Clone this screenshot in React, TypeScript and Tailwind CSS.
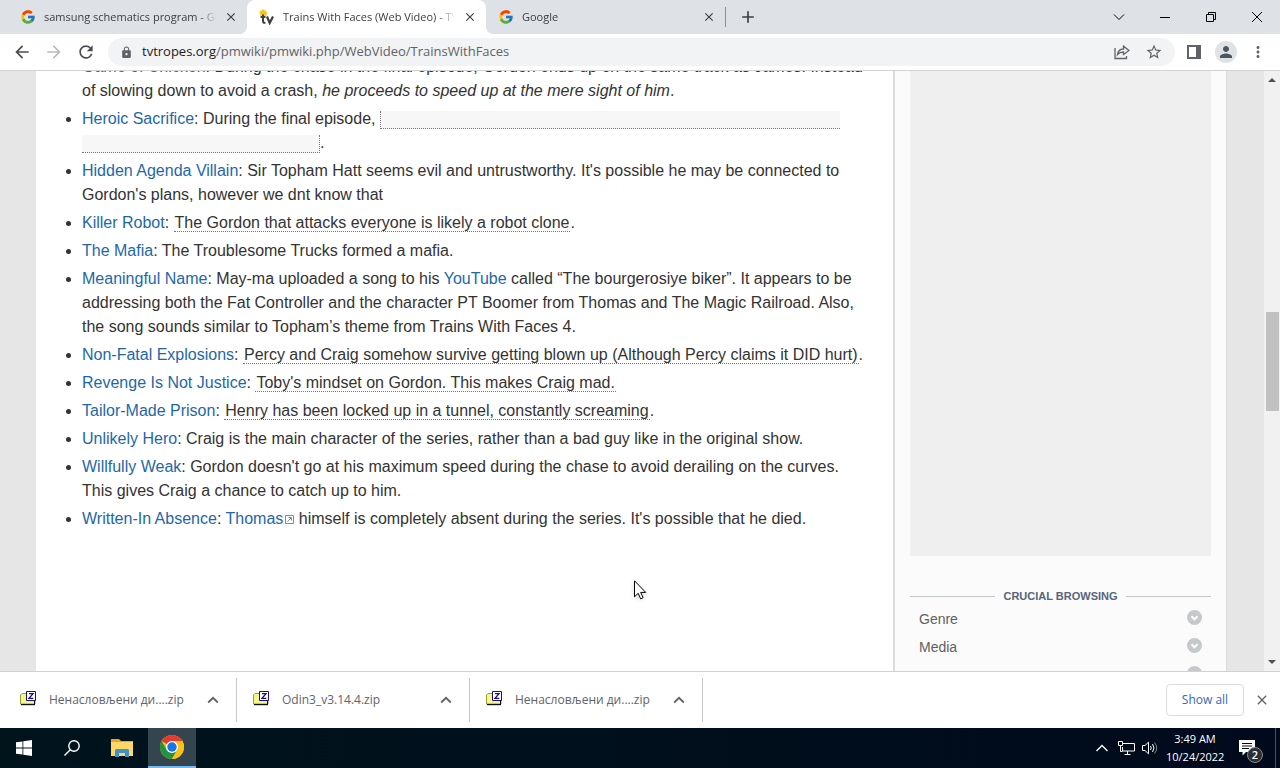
import type { ReactNode } from 'react';
import { FcGoogle } from 'react-icons/fc';
import {
  MdArrowBack,
  MdArrowForward,
  MdClose,
  MdLock,
  MdMoreVert,
  MdPerson,
  MdRefresh,
  MdStarOutline,
  MdAdd,
} from 'react-icons/md';

const DOWNLOADS = ['Ненасловљени ди....zip', 'Odin3_v3.14.4.zip', 'Ненасловљени ди....zip'];

// The last row is scrolled off, only its toggle shows
const CATEGORIES = ['Genre', 'Media', ''];

function TvIcon() {
  return (
    <svg width="16" height="16" viewBox="0 0 16 16" aria-hidden="true">
      <path d="M4 0l1.300 1.400L7 1.200l.2 1.700L8.800 4 7.600 5.200l.1 1.700-1.800-.2L4.500 8 3 6.600l-1.900.1.200-1.700L0 4l1.200-1.200L1 1.200l1.700.2z" fill="#fbc61c" />
      <path d="M4 5.500v6.700c0 1.300.6 1.800 2.500 1.500M1.500 8h5" stroke="#3c4043" strokeWidth="2" fill="none" />
      <path d="M8 7.500l2.700 6.500L14 7.500" stroke="#3c4043" strokeWidth="2.200" fill="none" />
    </svg>
  );
}

function ChevronUp({ className }: { className: string }) {
  return (
    <svg className={className} width="12" height="8" viewBox="0 0 12 8" fill="none" stroke="currentColor" strokeWidth="1.800" aria-hidden="true">
      <path d="M1.200 6.500L6 1.800l4.800 4.700" />
    </svg>
  );
}

function ZipIcon() {
  return (
    <svg className="mb-1" width="16" height="15" viewBox="0 0 16 15" aria-hidden="true">
      <path d="M.5 13V4L2 2.500h4l1 1.500h8v9z" fill="#f4f88a" stroke="#9a9c3a" />
      <path d="M1 13h14v1.200H1z" fill="#111" />
      <path d="M14.500 10v4" stroke="#111" />
      <path d="M6.500.500h9v9h-9z" fill="#fff" stroke="#1a0d84" />
      <path d="M9 2.700h4L9 7.300h4.300" stroke="#1a0d84" strokeWidth="1.300" fill="none" />
    </svg>
  );
}

function ChromeIcon() {
  return (
    <svg width="24" height="24" viewBox="0 0 24 24" aria-hidden="true">
      <circle cx="12" cy="12" r="12" fill="#fbc116" />
      <path d="M12 12L1.600 6A12 12 0 0122.400 6z" fill="#e33b2e" />
      <path d="M1.600 6A12 12 0 0012 24l5.200-9L12 12 6.800 15z" fill="#229342" />
      <path d="M12 6h10.400A12 12 0 0112 24l5.200-9z" fill="#fbc116" />
      <circle cx="12" cy="12" r="6" fill="#fff" />
      <circle cx="12" cy="12" r="4.700" fill="#1a73e8" />
    </svg>
  );
}

function Tab({ icon, title, active }: { icon: ReactNode; title: string; active?: boolean }) {
  return (
    <div className={`relative flex h-full w-[239px] items-center pl-3 pr-2 ${active ? 'rounded-t-lg bg-white' : ''}`}>
      <span className="flex w-4 shrink-0">{icon}</span>
      <span className="ml-2 w-[177px] overflow-hidden whitespace-nowrap [mask-image:linear-gradient(to_right,black_90%,transparent)]">
        {title}
      </span>
      <button aria-label={`Close ${title}`} className="ml-2 flex w-4 justify-center">
        <MdClose size={14} className="stroke-current" />
      </button>
      {active && (
        <>
          <span className="absolute -left-2 bottom-0 size-2 bg-[radial-gradient(circle_at_0_0,transparent_8px,white_8px)]" />
          <span className="absolute -right-2 bottom-0 size-2 bg-[radial-gradient(circle_at_100%_0,transparent_8px,white_8px)]" />
        </>
      )}
    </div>
  );
}

function TabStrip() {
  return (
    <div className="flex h-[34px] items-center bg-[#dee1e6] pl-2 text-[11px] text-[#3c4043]">
      <Tab icon={<FcGoogle size={16} />} title="samsung schematics program - Google Search" />
      <Tab icon={<TvIcon />} title="Trains With Faces (Web Video) - TV Tropes" active />
      <Tab icon={<FcGoogle size={16} />} title="Google" />
      <span className="h-5 w-px bg-[#8b8e93]" />
      <button aria-label="New tab" className="ml-3"><MdAdd size={20} /></button>
      <div className="ml-auto flex h-7 items-center text-black">
        <button aria-label="Search tabs" className="flex w-[46px] justify-center">
          <svg width="12" height="8" viewBox="0 0 12 8" fill="none" stroke="currentColor"><path d="M1 1.500l5 5 5-5" /></svg>
        </button>
        <button aria-label="Minimize" className="flex w-[46px] justify-center">
          <svg width="10" height="10" viewBox="0 0 10 10" stroke="currentColor"><path d="M0 5.500h10" /></svg>
        </button>
        <button aria-label="Restore" className="flex w-[46px] justify-center">
          <svg width="10" height="10" viewBox="0 0 10 10" fill="none" stroke="currentColor"><path d="M.5 2.500h7v7h-7zM2.500 2.500v-2h7v7h-2" /></svg>
        </button>
        <button aria-label="Close window" className="flex w-[46px] justify-center">
          <svg width="10" height="10" viewBox="0 0 10 10" stroke="currentColor"><path d="M0 0l10 10M10 0L0 10" /></svg>
        </button>
      </div>
    </div>
  );
}

function Toolbar() {
  return (
    <div className="flex h-[37px] items-center border-b border-[#d0d2d5] bg-white pl-3 pr-[13px] text-[#5f6368]">
      <button aria-label="Back" className="text-[#4a4d51]"><MdArrowBack size={20} /></button>
      <button aria-label="Forward" className="ml-3 text-[#b9bbbe]"><MdArrowForward size={20} /></button>
      <button aria-label="Reload" className="ml-3 text-[#4a4d51]"><MdRefresh size={20} /></button>
      <div className="ml-3 flex h-7 flex-1 items-center rounded-full bg-[#f1f3f4] px-3">
        <MdLock size={13} />
        <div className="ml-[9px] flex-1 text-[13px]">
          <span className="text-[#202124]">tvtropes.org</span>/pmwiki/pmwiki.php/WebVideo/TrainsWithFaces
        </div>
        <button aria-label="Share">
          <svg width="16" height="16" viewBox="0 0 16 16" fill="none" stroke="currentColor" strokeWidth="1.300"><path d="M1 4v10.500h11.500V12M3.500 10.500c.5-3.500 3-5.500 6-5.500V2.200L15 6.500l-5.500 4V8c-2.500 0-4.500.7-6 2.500z" /></svg>
        </button>
        <button aria-label="Bookmark" className="ml-[15px]"><MdStarOutline size={18} /></button>
      </div>
      <button aria-label="Side panel" className="ml-3">
        <svg width="14" height="14" viewBox="0 0 14 14"><path d="M1 1h12v12H1z" fill="none" stroke="currentColor" strokeWidth="2" /><path d="M9 1h4v12H9z" fill="currentColor" /></svg>
      </button>
      <button aria-label="Profile" className="ml-[14px] flex size-[22px] items-center justify-center rounded-full bg-[#dfe3e6] text-[#4a5660]"><MdPerson size={18} /></button>
      <button aria-label="Menu" className="ml-3"><MdMoreVert size={18} /></button>
    </div>
  );
}

function A({ children }: { children: ReactNode }) {
  return <a href="#" className="text-[#1e68a8]">{children}</a>;
}

function Spoiler({ children }: { children: ReactNode }) {
  return <span className="border-b border-dotted border-[#777] px-px">{children}</span>;
}

function Article() {
  return (
    <article className="min-w-0 flex-1 overflow-hidden bg-white pl-[46px] pr-7">
      <ul className="-mt-4 list-disc space-y-1 font-['Liberation_Sans',Arial,sans-serif] text-base text-[#333]">
        <li>
          <A>Game of Chicken</A>: During the chase in the final episode, Gordon ends up on the same track as James. Instead
          of slowing down to avoid a crash, <em>he proceeds to speed up at the mere sight of him</em>.
        </li>
        <li>
          <A>Heroic Sacrifice</A>: During the final episode,{' '}
          <span className="mt-1 inline-block h-[18px] w-[460px] border-b border-l border-dotted border-[#777] bg-[#f7f7f7] align-top" />
          <span className="mt-1 inline-block h-[18px] w-[238px] border-b border-r border-dotted border-[#777] bg-[#f7f7f7] align-top" />.
        </li>
        <li>
          <A>Hidden Agenda Villain</A>: Sir Topham Hatt seems evil and untrustworthy. It's possible he may be connected to
          Gordon's plans, however we dnt know that
        </li>
        <li><A>Killer Robot</A>: <Spoiler>The Gordon that attacks everyone is likely a robot clone</Spoiler>.</li>
        <li><A>The Mafia</A>: The Troublesome Trucks formed a mafia.</li>
        <li>
          <A>Meaningful Name</A>: May-ma uploaded a song to his <A>YouTube</A> called “The bourgerosiye biker”. It appears to be
          addressing both the Fat Controller and the character PT Boomer from Thomas and The Magic Railroad. Also,
          the song sounds similar to Topham’s theme from Trains With Faces 4.
        </li>
        <li>
          <A>Non-Fatal Explosions</A>:{' '}
          <Spoiler>Percy and Craig somehow survive getting blown up (Although Percy claims it DID hurt)</Spoiler>.
        </li>
        <li><A>Revenge Is Not Justice</A>: <Spoiler>Toby's mindset on Gordon. This makes Craig mad.</Spoiler></li>
        <li><A>Tailor-Made Prison</A>: <Spoiler>Henry has been locked up in a tunnel, constantly screaming</Spoiler>.</li>
        <li><A>Unlikely Hero</A>: Craig is the main character of the series, rather than a bad guy like in the original show.</li>
        <li>
          <A>Willfully Weak</A>: Gordon doesn't go at his maximum speed during the chase to avoid derailing on the curves.
          This gives Craig a chance to catch up to him.
        </li>
        <li>
          <A>Written-In Absence</A>:{' '}
          <A>
            Thomas
            <svg className="ml-0.5 inline align-baseline" width="9" height="9" viewBox="0 0 9 9" fill="none" stroke="#888" aria-hidden="true"><path d="M.5.500h8v8h-8zM2.500 6.500l3.500-3.500M3.500 2.500h3v3" /></svg>
          </A>{' '}
          himself is completely absent during the series. It's possible that he died.
        </li>
      </ul>
    </article>
  );
}

function Sidebar() {
  return (
    <aside className="w-[334px] shrink-0 overflow-hidden border-l-2 border-r border-[#dcdcdc] bg-[#fbfbfb] px-[15px] font-['Liberation_Sans',Arial,sans-serif]">
      <div className="h-[485px] bg-[#efefef]" />
      <div className="mt-8 flex items-center gap-2">
        <span className="h-px flex-1 bg-[#c4c8cc]" />
        <h2 className="text-[11px] font-bold leading-4 text-[#56657a]">CRUCIAL BROWSING</h2>
        <span className="h-px flex-1 bg-[#c4c8cc]" />
      </div>
      <ul className="mt-px text-sm text-[#606060]">
        {CATEGORIES.map((name, i) => (
          <li key={i} className="flex h-7 items-center px-[9px]">
            {name && <a href="#">{name}</a>}
            <svg className="mb-1 ml-auto" width="15" height="15" viewBox="0 0 15 15" aria-hidden="true">
              <circle cx="7.500" cy="7.500" r="7.500" fill="#c5c9cc" />
              <path d="M4.500 6.300l3 3 3-3" stroke="#fff" strokeWidth="2" fill="none" />
            </svg>
          </li>
        ))}
      </ul>
    </aside>
  );
}

function Scrollbar() {
  return (
    <div className="flex w-4 shrink-0 flex-col items-center bg-[#f1f1f1] py-1.5">
      <svg width="8" height="5" viewBox="0 0 8 5" className="shrink-0"><path d="M0 5l4-4 4 4z" fill="#505050" /></svg>
      <div className="grow-[230]" />
      <div className="h-[99px] w-[13px] bg-[#c1c1c1]" />
      <div className="grow-[249]" />
      <svg width="8" height="5" viewBox="0 0 8 5" className="shrink-0"><path d="M0 0l4 4 4-4z" fill="#505050" /></svg>
    </div>
  );
}

function DownloadShelf() {
  return (
    <div className="flex h-[57px] items-center border-t border-[#cfd1d4] bg-white pl-1 pr-[10px] text-xs text-[#5f6368]">
      {DOWNLOADS.map((name, i) => (
        <div key={i} className="flex h-11 w-[233px] items-center border-r border-[#c6c8cb] pl-4 pr-[17px]">
          <ZipIcon />
          <button className="ml-[13px] flex-1 text-left">{name}</button>
          <button aria-label={`Options for ${name}`}><ChevronUp className="text-[#5f6368]" /></button>
        </div>
      ))}
      <button className="ml-auto h-8 w-[78px] rounded border border-[#dadce0] font-medium text-[#3367c0]">Show all</button>
      <button aria-label="Close downloads" className="ml-[10px]"><MdClose size={16} className="stroke-current" /></button>
    </div>
  );
}

function Taskbar() {
  return (
    <div className="flex h-10 items-center bg-linear-to-r from-[#00141c] to-[#000a1c] text-[11px] text-white">
      <button aria-label="Start" className="flex h-full w-12 items-center justify-center">
        <svg width="16" height="16" viewBox="0 0 16 16" fill="#fff"><path d="M0 2.300l6.500-.9v6.200H0zM7.300 1.300L16 0v7.600H7.300zM0 8.400h6.500v6.200L0 13.700zM7.300 8.400H16V16l-8.700-1.300z" /></svg>
      </button>
      <button aria-label="Search" className="flex h-full w-12 items-center justify-center">
        <svg width="16" height="16" viewBox="0 0 16 16" fill="none" stroke="#fff" strokeWidth="1.400"><circle cx="10" cy="6" r="5.200" /><path d="M6.300 9.700L.5 15.500" /></svg>
      </button>
      <button aria-label="File Explorer" className="flex h-full w-[52px] items-center justify-center">
        <svg width="22" height="18" viewBox="0 0 22 18"><path d="M0 0h8l2 2h12v15H0z" fill="#e8a825" /><path d="M0 3h22v14H0z" fill="#ffd767" /><path d="M4 18v-7l1-1h12l1 1v7h-4v-4H8v4z" fill="#3d93c7" /></svg>
      </button>
      <button aria-label="Google Chrome" className="flex h-full w-12 items-center justify-center border-b-2 border-[#76b9ed] bg-[#34454f]"><ChromeIcon /></button>
      <div className="ml-auto flex h-full items-center">
        <button aria-label="Show hidden icons">
          <svg width="12" height="8" viewBox="0 0 12 8" fill="none" stroke="#fff" strokeWidth="1.300"><path d="M.5 7L6 1.500 11.500 7" /></svg>
        </button>
        <svg className="ml-[10px]" width="17" height="14" viewBox="0 0 17 14" fill="none" stroke="#fff" aria-hidden="true"><path d="M5 2.500h11.500v7.500H4.500V6M.5.500h4v4h-4zM2.500 4.500v6h2M9.500 10v3M6.500 13.500h6" /></svg>
        <svg className="ml-[7px]" width="16" height="14" viewBox="0 0 16 14" fill="none" stroke="#fff" aria-hidden="true"><path d="M.5 4.500H3l3.500-3.300v11.600L3 9.500H.5zM8.500 5q1.500 2 0 4M10.500 3q3 4 0 8" /><path d="M12.500 1.500q4.500 5.500 0 11" opacity=".5" /></svg>
        <div className="ml-2 w-[58px] whitespace-nowrap text-center leading-[18px]">
          <div>3:49 AM</div>
          <div>10/24/2022</div>
        </div>
        <button aria-label="2 notifications" className="relative ml-[15px] mr-3 mt-1 flex h-6 w-6 items-start">
          <svg className="mt-0.5" width="16" height="16" viewBox="0 0 16 16"><path d="M0 0h16v12H7l-3.500 3.500V12H0z" fill="#fff" /><path d="M3 3.500h10M3 6h10M3 8.500h7" stroke="#000a1c" /></svg>
          <span className="absolute -bottom-px right-0 flex size-4 items-center justify-center rounded-full border border-[#888] bg-[#2b2f36] font-semibold">2</span>
        </button>
        <span className="mr-1 h-full w-px bg-[#4a5160]" />
      </div>
    </div>
  );
}

export default function App() {
  return (
    <div className="flex h-screen flex-col overflow-hidden font-['Open_Sans','Noto_Sans',sans-serif]">
      <TabStrip />
      <Toolbar />
      <main className="flex min-h-0 flex-1 bg-[#e6e6e6]">
        <div className="ml-9 mr-[37px] flex min-w-0 flex-1 overflow-hidden">
          <Article />
          <Sidebar />
        </div>
        <Scrollbar />
      </main>
      <DownloadShelf />
      <Taskbar />
      {/* Mouse pointer */}
      <svg className="absolute left-[634px] top-[580px] drop-shadow-sm" width="13" height="20" viewBox="0 0 13 20" aria-hidden="true">
        <path d="M.5.800v16l3.700-3.500 2.400 5.500 2.500-1.100-2.400-5.300h5z" fill="#fff" stroke="#000" />
      </svg>
    </div>
  );
}
